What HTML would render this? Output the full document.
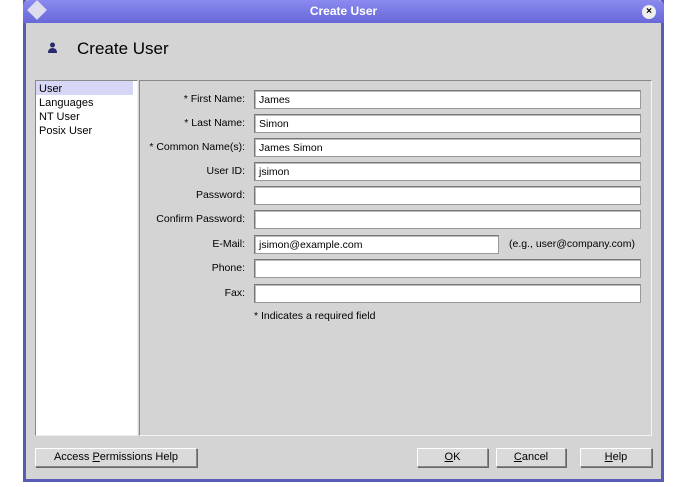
<!DOCTYPE html>
<html><head><style>
*{box-sizing:border-box;margin:0;padding:0}
body{width:686px;height:487px;background:#fff;position:relative;font-family:"Liberation Sans",sans-serif;font-size:11px;overflow:hidden}
.win{position:absolute;left:23px;top:0;width:641px;height:482px;background:#d4d4d4;border:3px solid #5a5ab8;border-top:none}
.title{position:absolute;left:23px;top:0;width:641px;height:23px;background:linear-gradient(#8a8af0,#6868d8);color:#fff;font-weight:bold;font-size:12px;text-align:center;line-height:23px;border-radius:6px 6px 0 0}
.abs{position:absolute}
.inp{position:absolute;left:254px;width:387px;height:19px;background:#fff;border:1px solid #999;border-top-color:#777;border-left-color:#777;box-shadow:inset 1px 1px 0 #bbb;padding:3px 0 0 4px;font-size:10.5px}
.lbl{position:absolute;right:441px;font-size:10.5px;text-align:right;white-space:nowrap}
.btn{position:absolute;top:448px;height:19px;background:#dadada;border:1px solid #888;border-top-color:#fff;border-left-color:#fff;box-shadow:1px 1px 0 #666;text-align:center;line-height:17px;font-size:11px}
</style></head><body>
<div class="win"></div>
<div class="title">Create User</div>
<div class="abs" style="left:30px;top:3px;width:14px;height:14px;background:#dde;transform:rotate(45deg)"></div>
<div class="abs" style="left:642px;top:5px;width:14px;height:14px;border-radius:7px;background:#eee;color:#000;font-size:10px;font-weight:bold;text-align:center;line-height:14px">×</div>
<svg class="abs" style="left:47px;top:42px" width="11" height="12"><circle cx="5.5" cy="3" r="2.5" fill="#2a2a70"/><path d="M1 11 Q1 6 5.5 6 Q10 6 10 11Z" fill="#2a2a70"/></svg>
<div class="abs" style="left:77px;top:39px;font-size:17px">Create User</div>
<div class="abs" style="left:35px;top:80px;width:103px;height:356px;background:#fff;border:1px solid #888;border-right-color:#eee;border-bottom-color:#eee"></div>
<div class="abs" style="left:36px;top:81px;width:97px;height:14px;background:#d6d6f6"></div>
<div class="abs" style="left:39px;top:82px;line-height:14px;font-size:11px">User<br>Languages<br>NT User<br>Posix User</div>
<div class="abs" style="left:139px;top:80px;width:513px;height:356px;border:1px solid #888;border-right-color:#f4f4f4;border-bottom-color:#f4f4f4"></div>

<div class="lbl" style="top:93px">* First Name:</div><div class="inp" style="top:90px">James</div>
<div class="lbl" style="top:117px">* Last Name:</div><div class="inp" style="top:114px">Simon</div>
<div class="lbl" style="top:141px">* Common Name(s):</div><div class="inp" style="top:138px">James Simon</div>
<div class="lbl" style="top:165px">User ID:</div><div class="inp" style="top:162px">jsimon</div>
<div class="lbl" style="top:189px">Password:</div><div class="inp" style="top:186px"></div>
<div class="lbl" style="top:213px">Confirm Password:</div><div class="inp" style="top:210px"></div>
<div class="lbl" style="top:238px">E-Mail:</div><div class="inp" style="top:235px;width:245px">jsimon@example.com</div>
<div class="abs" style="left:509px;top:238px;font-size:10.5px">(e.g., user@company.com)</div>
<div class="lbl" style="top:262px">Phone:</div><div class="inp" style="top:259px"></div>
<div class="lbl" style="top:287px">Fax:</div><div class="inp" style="top:284px"></div>
<div class="abs" style="left:254px;top:310px;font-size:10.5px">* Indicates a required field</div>

<div class="btn" style="left:35px;width:162px">Access <u>P</u>ermissions Help</div>
<div class="btn" style="left:417px;width:71px"><u>O</u>K</div>
<div class="btn" style="left:496px;width:70px"><u>C</u>ancel</div>
<div class="btn" style="left:580px;width:72px"><u>H</u>elp</div>
</body></html>
